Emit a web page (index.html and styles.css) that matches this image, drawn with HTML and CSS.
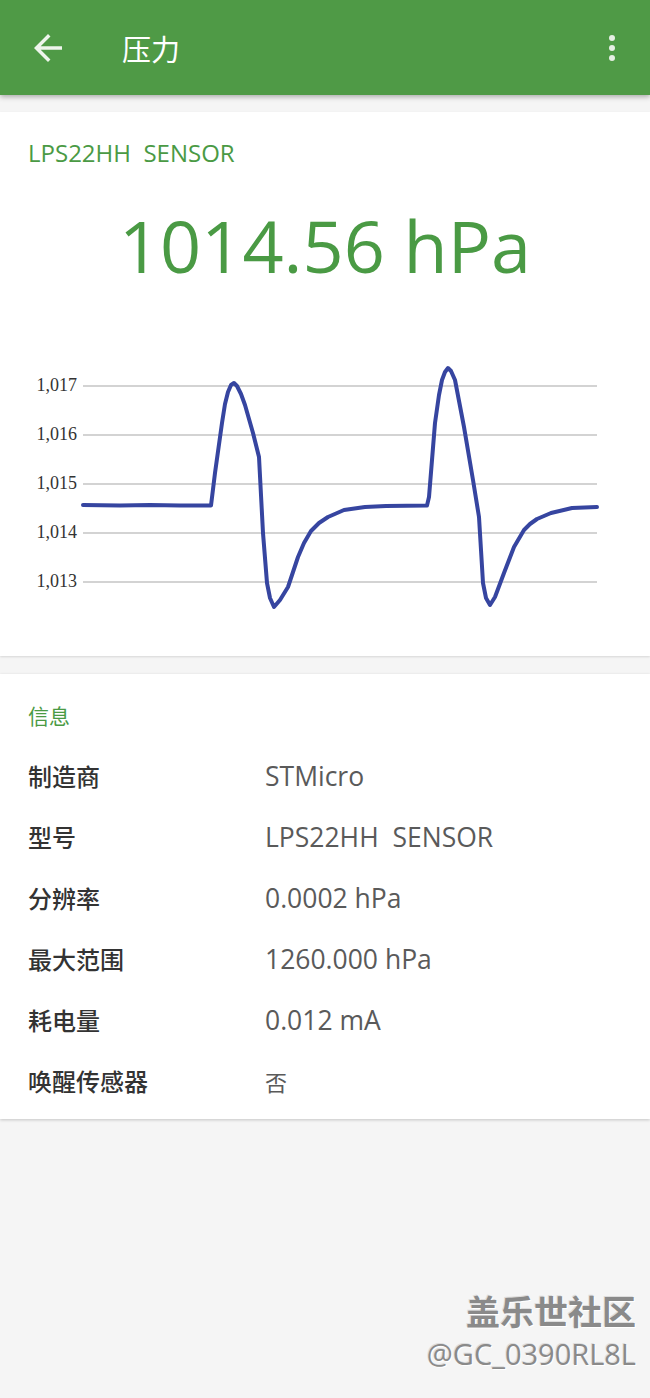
FILE: index.html
```html
<!DOCTYPE html>
<html lang="zh-CN">
<head>
    <meta charset="UTF-8">
    <meta name="viewport" content="width=device-width, initial-scale=1.0">
    <title>压力</title>
    <link rel="stylesheet" href="styles.css">
</head>
<body>
    <header class="appbar">
        <svg class="appbar-back" viewBox="0 0 24 24" width="42" height="42">
            <path d="M20 11H7.83l5.59-5.59L12 4l-8 8 8 8 1.41-1.41L7.83 13H20v-2z" fill="currentColor"/>
        </svg>
        <h1 class="appbar-title">压力</h1>
        <svg class="appbar-menu" viewBox="0 0 10 30" width="10" height="30">
            <circle cx="5" cy="4" r="3" fill="currentColor"/>
            <circle cx="5" cy="14" r="3" fill="currentColor"/>
            <circle cx="5" cy="24" r="3" fill="currentColor"/>
        </svg>
    </header>

    <main class="content">
        <section class="card chart-card">
            <h2 class="sensor-name">LPS22HH&nbsp; SENSOR</h2>
            <div class="reading">1014.56 hPa</div>
            <svg class="chart" viewBox="0 0 650 340" width="650" height="340">
                <g class="chart-grid">
                    <line x1="83" y1="86" x2="597" y2="86"/>
                    <line x1="83" y1="135" x2="597" y2="135"/>
                    <line x1="83" y1="184" x2="597" y2="184"/>
                    <line x1="83" y1="233" x2="597" y2="233"/>
                    <line x1="83" y1="282" x2="597" y2="282"/>
                </g>
                <g class="chart-labels">
                    <text x="77" y="91">1,017</text>
                    <text x="77" y="140">1,016</text>
                    <text x="77" y="189">1,015</text>
                    <text x="77" y="238">1,014</text>
                    <text x="77" y="287">1,013</text>
                </g>
                <!-- pressure trace, y = px below svg top -->
                <polyline class="chart-line" points="83,205 120,205.5 150,205 180,205.5 211,205.5 215,173 222,123 225,104 228,92 231,85 234,83 237,86 241,94 245,105 253,133 259,157 263,233 267,283 270,298 274,307 280,300 288,287 298,257 304,243 311,231 319,223 328,217 344,210 365,207 386,206 427,205.5 429,197 435,123 439,95 442,80 445,72 448,68 451,71 455,80 464,127 473,180 479,217 483,283 486,298 490,305 495,297 504,273 514,247 524,230 530,224 537,219 551,213 572,208 597,207"/>
            </svg>
        </section>

        <section class="card info-card">
            <h3 class="info-title">信息</h3>
            <div class="info-list">
                <div class="info-row"><span class="info-label">制造商</span><span class="info-value">STMicro</span></div>
                <div class="info-row"><span class="info-label">型号</span><span class="info-value">LPS22HH&nbsp; SENSOR</span></div>
                <div class="info-row"><span class="info-label">分辨率</span><span class="info-value">0.0002 hPa</span></div>
                <div class="info-row"><span class="info-label">最大范围</span><span class="info-value">1260.000 hPa</span></div>
                <div class="info-row"><span class="info-label">耗电量</span><span class="info-value">0.012 mA</span></div>
                <div class="info-row"><span class="info-label">唤醒传感器</span><span class="info-value cjk">否</span></div>
            </div>
        </section>
    </main>

    <div class="watermark">
        <div class="watermark-brand">盖乐世社区</div>
        <div class="watermark-user">@GC_0390RL8L</div>
    </div>
</body>
</html>
```

FILE: styles.css
```css
html, body {
    margin: 0;
    padding: 0;
}
body {
    width: 650px;
    height: 1398px;
    background: #f5f5f5;
    font-family: 'Open Sans', 'Noto Sans CJK SC', sans-serif;
    color: #333;
    position: relative;
    overflow: hidden;
}
.appbar {
    height: 95px;
    background: #4f9a46;
    color: #eef5ec;
    display: flex;
    align-items: center;
    box-shadow: 0 2px 5px rgba(0, 0, 0, 0.3);
    position: relative;
    z-index: 1;
}
.appbar-back {
    margin-left: 27px;
}
.appbar-title {
    margin: 0 0 0 53px;
    font-family: 'Noto Sans CJK SC', sans-serif;
    font-weight: 400;
    font-size: 29px;
    color: #fff;
    flex: 1;
}
.appbar-menu {
    margin-right: 33px;
    margin-top: 2px;
    color: #e6efe4;
}
.content {
    padding-top: 17px;
}
.card {
    background: #fff;
    box-shadow: 0 1px 2px rgba(0, 0, 0, 0.12);
}
.chart-card {
    padding: 26px 0 16px;
}
.sensor-name {
    margin: 0 0 0 28px;
    font-size: 24px;
    line-height: 30px;
    font-weight: 400;
    color: #4a9a44;
}
.reading {
    margin-top: 32px;
    text-align: center;
    font-size: 72px;
    line-height: 90px;
    color: #4a9a44;
}
.chart {
    display: block;
    margin-top: 10px;
}
.chart-grid line {
    stroke: #c4c4c4;
    stroke-width: 1.5;
}
.chart-labels text {
    font-family: 'Liberation Serif', serif;
    font-size: 18px;
    fill: #333;
    text-anchor: end;
}
.chart-line {
    fill: none;
    stroke: #3645a0;
    stroke-width: 4;
    stroke-linejoin: round;
    stroke-linecap: round;
}
.info-card {
    margin-top: 18px;
    padding: 27px 0 8px;
    box-shadow: 0 1px 3px rgba(0, 0, 0, 0.2);
}
.info-title {
    margin: 0 0 16px 28px;
    font-family: 'Noto Sans CJK SC', sans-serif;
    font-size: 21px;
    line-height: 28px;
    font-weight: 400;
    color: #4a9a44;
}
.info-row {
    height: 61px;
    display: flex;
    align-items: center;
    padding-left: 28px;
}
.info-label {
    width: 237px;
    font-family: 'Noto Sans CJK SC', sans-serif;
    font-size: 24px;
    font-weight: 500;
    color: #333;
}
.info-value {
    font-size: 26.5px;
    color: #5a5a5a;
}
.info-value.cjk {
    font-family: 'Noto Sans CJK SC', sans-serif;
    font-size: 22px;
}
.watermark {
    position: absolute;
    right: 14px;
    top: 1288px;
    text-align: right;
    color: #8a8a8a;
    text-shadow: 1px 1px 0 #fff, -1px -1px 0 #ddd;
}
.watermark-brand {
    font-family: 'Noto Sans CJK SC', sans-serif;
    font-size: 34px;
    font-weight: 700;
    line-height: 46px;
}
.watermark-user {
    font-size: 29px;
    line-height: 40px;
}
```
